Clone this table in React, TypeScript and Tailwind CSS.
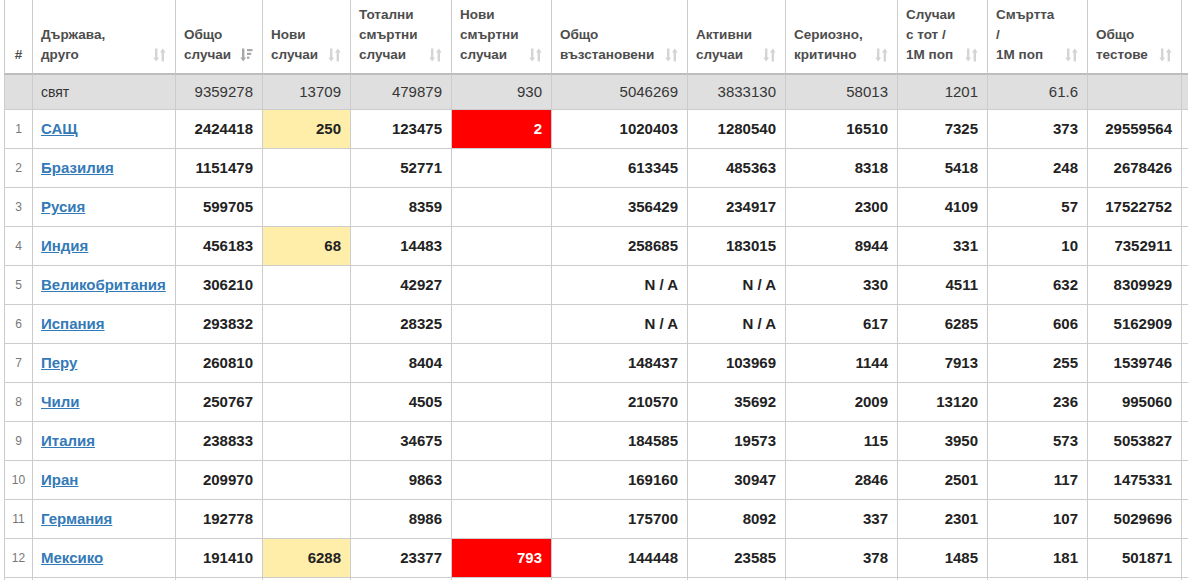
import React from "react";

type Row = {
  n: number;
  c: string;
  v: string[];
};

const rows: Row[] = [
  { n: 1, c: "САЩ", v: ["2424418", "250", "123475", "2", "1020403", "1280540", "16510", "7325", "373", "29559564"] },
  { n: 2, c: "Бразилия", v: ["1151479", "", "52771", "", "613345", "485363", "8318", "5418", "248", "2678426"] },
  { n: 3, c: "Русия", v: ["599705", "", "8359", "", "356429", "234917", "2300", "4109", "57", "17522752"] },
  { n: 4, c: "Индия", v: ["456183", "68", "14483", "", "258685", "183015", "8944", "331", "10", "7352911"] },
  { n: 5, c: "Великобритания", v: ["306210", "", "42927", "", "N / A", "N / A", "330", "4511", "632", "8309929"] },
  { n: 6, c: "Испания", v: ["293832", "", "28325", "", "N / A", "N / A", "617", "6285", "606", "5162909"] },
  { n: 7, c: "Перу", v: ["260810", "", "8404", "", "148437", "103969", "1144", "7913", "255", "1539746"] },
  { n: 8, c: "Чили", v: ["250767", "", "4505", "", "210570", "35692", "2009", "13120", "236", "995060"] },
  { n: 9, c: "Италия", v: ["238833", "", "34675", "", "184585", "19573", "115", "3950", "573", "5053827"] },
  { n: 10, c: "Иран", v: ["209970", "", "9863", "", "169160", "30947", "2846", "2501", "117", "1475331"] },
  { n: 11, c: "Германия", v: ["192778", "", "8986", "", "175700", "8092", "337", "2301", "107", "5029696"] },
  { n: 12, c: "Мексико", v: ["191410", "6288", "23377", "793", "144448", "23585", "378", "1485", "181", "501871"] },
];

const world = ["9359278", "13709", "479879", "930", "5046269", "3833130", "58013", "1201", "61.6", ""];

const headers: string[][] = [
  ["Държава,", "друго"],
  ["Общо", "случаи"],
  ["Нови", "случаи"],
  ["Тотални", "смъртни", "случаи"],
  ["Нови", "смъртни", "случаи"],
  ["Общо", "възстановени"],
  ["Активни", "случаи"],
  ["Сериозно,", "критично"],
  ["Случаи", "с тот /", "1M поп"],
  ["Смъртта", "/", "1M поп"],
  ["Общо", "тестове"],
  [""],
];

function SortIcon() {
  return (
    <svg width="13" height="14" viewBox="0 0 13 14" className="shrink-0 mb-[3px]">
      <g fill="#d4d4d4">
        <rect x="2" y="0.5" width="2.4" height="10" />
        <polygon points="0.3,9.5 6.1,9.5 3.2,13.5" />
        <rect x="8.6" y="3.5" width="2.4" height="10" />
        <polygon points="6.9,4.5 12.7,4.5 9.8,0.5" />
      </g>
    </svg>
  );
}

function SortActiveIcon() {
  return (
    <svg width="13" height="14" viewBox="0 0 13 14" className="shrink-0 mb-[3px]">
      <g fill="#a8a8a8">
        <rect x="2" y="0.5" width="2.4" height="10" />
        <polygon points="0.3,9.5 6.1,9.5 3.2,13.5" />
        <rect x="7" y="1" width="5.5" height="2.2" />
        <rect x="7" y="4.8" width="4.2" height="2.2" />
        <rect x="7" y="8.6" width="2.4" height="2.2" />
      </g>
    </svg>
  );
}

const cols = "grid grid-cols-[29px_143px_87px_88px_101px_100px_136px_98px_112px_90px_100px_94px_120px]";

export default function App() {
  return (
    <div
      className="w-[1188px] h-[580px] overflow-hidden bg-white"
      style={{ fontFamily: '"Liberation Sans", Arial, sans-serif' }}
    >
      <div className="ml-[4px] w-[1298px]">
        {/* header */}
        <div className={cols}>
          <div className="h-[75px] border-l border-r border-b-2 border-[#cccccc] border-b-[#bdbdbd] flex items-end justify-center pb-[8px] text-[13.5px] leading-[20px] font-bold text-[#4d4d4d]">
            #
          </div>
          {headers.map((h, i) => (
            <div
              key={i}
              className="h-[75px] border-r border-b-2 border-[#cccccc] border-b-[#bdbdbd] flex items-end justify-between pl-[8px] pr-[9px] pb-[8px] text-[13.5px] leading-[20px] font-bold text-[#4d4d4d]"
            >
              <div className="flex flex-col">
                {h.map((l, j) => (
                  <span key={j} className="whitespace-nowrap">
                    {l}
                  </span>
                ))}
              </div>
              {i === 11 ? null : i === 1 ? <SortActiveIcon /> : <SortIcon />}
            </div>
          ))}
        </div>

        {/* world row */}
        <div className={cols}>
          <div className="h-[35px] border-l border-r border-b border-[#cccccc] bg-[#dfdfdf]" />
          <div className="h-[35px] border-r border-b border-[#cccccc] bg-[#dfdfdf] flex items-center pl-[8px] text-[14px] text-[#333]">
            свят
          </div>
          {world.map((v, i) => (
            <div
              key={i}
              className="h-[35px] border-r border-b border-[#cccccc] bg-[#dfdfdf] flex items-center justify-end pr-[9px] text-[15px] text-[#363636]"
            >
              {v}
            </div>
          ))}
          <div className="h-[35px] border-r border-b border-[#cccccc] bg-[#dfdfdf]" />
        </div>

        {/* data rows */}
        {rows.map((r) => (
          <div key={r.n} className={cols}>
            <div className="h-[39px] border-l border-r border-b border-[#cccccc] flex items-center justify-center text-[12px] text-[#777]">
              {r.n}
            </div>
            <div className="h-[39px] border-r border-b border-[#cccccc] flex items-center pl-[8px]">
              <a href="#" className="text-[15px] font-bold text-[#337ab7] underline whitespace-nowrap">
                {r.c}
              </a>
            </div>
            {r.v.map((v, i) => {
              let bg = "";
              let color = "text-[#222]";
              if (i === 1 && v) bg = "bg-[#ffeeaa]";
              if (i === 3 && v) {
                bg = "bg-[#ff0000]";
                color = "text-white";
              }
              return (
                <div
                  key={i}
                  className={`h-[39px] border-r border-b border-[#cccccc] flex items-center justify-end pr-[9px] text-[15px] font-bold ${color} ${bg}`}
                >
                  {v}
                </div>
              );
            })}
            <div className="h-[39px] border-r border-b border-[#cccccc]" />
          </div>
        ))}

        {/* next row (cut off) */}
        <div className={cols}>
          {Array.from({ length: 13 }).map((_, i) => (
            <div
              key={i}
              className={`h-[39px] border-r border-b border-[#cccccc] ${i === 0 ? "border-l" : ""}`}
            />
          ))}
        </div>
      </div>
    </div>
  );
}
